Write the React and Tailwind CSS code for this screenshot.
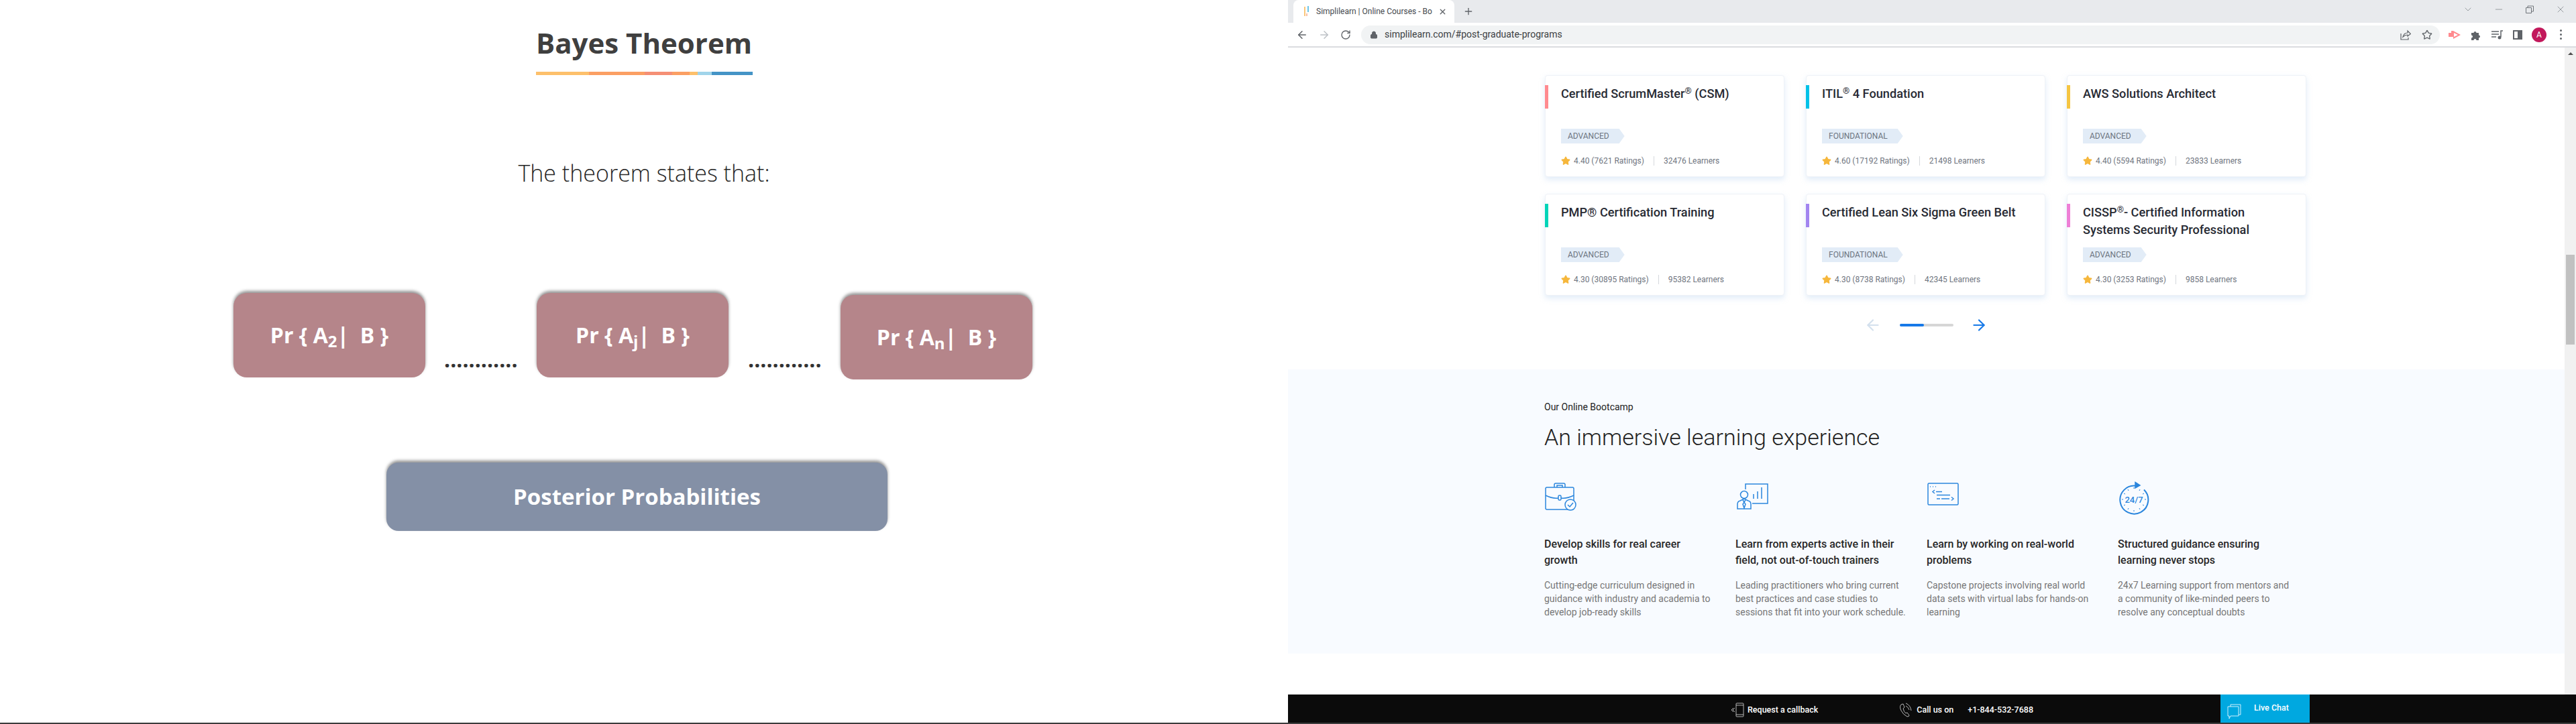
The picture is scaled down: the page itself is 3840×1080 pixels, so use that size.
import { ArrowLeft, ArrowRight, RotateCw, Lock, Star, X, Plus, Minus, ChevronDown } from "lucide-react";

const courses = [
  { title: <>Certified ScrumMaster<sup className="text-[13px] font-normal">®</sup> (CSM)</>, bar: "bg-[#ff8a8f]", level: "ADVANCED", rating: "4.40 (7621 Ratings)", learners: "32476 Learners" },
  { title: <>ITIL<sup className="text-[13px] font-normal">®</sup> 4 Foundation</>, bar: "bg-[#00c2e8]", level: "FOUNDATIONAL", rating: "4.60 (17192 Ratings)", learners: "21498 Learners" },
  { title: "AWS Solutions Architect", bar: "bg-[#f5c542]", level: "ADVANCED", rating: "4.40 (5594 Ratings)", learners: "23833 Learners" },
  { title: "PMP® Certification Training", bar: "bg-[#00d4b8]", level: "ADVANCED", rating: "4.30 (30895 Ratings)", learners: "95382 Learners" },
  { title: "Certified Lean Six Sigma Green Belt", bar: "bg-[#a285f0]", level: "FOUNDATIONAL", rating: "4.30 (8738 Ratings)", learners: "42345 Learners" },
  { title: <>CISSP<sup className="text-[13px] font-normal">®</sup>- Certified Information Systems Security Professional</>, bar: "bg-[#ee7fd6]", level: "ADVANCED", rating: "4.30 (3253 Ratings)", learners: "9858 Learners" },
];

function Briefcase() {
  return (
    <svg width="48" height="42" viewBox="0 0 48 42" fill="none" stroke="#2b86dd" strokeWidth="1.5">
      <rect x="1" y="7" width="42" height="33" rx="2" />
      <path d="M14 7V3a2 2 0 0 1 2-2h12a2 2 0 0 1 2 2v4M18 7V4h8v3" />
      <path d="M1 19q10 5 19 4M24 23q9 1 19-4" />
      <rect x="20" y="19" width="4" height="7" rx="1.5" />
      <circle cx="38" cy="33" r="8" fill="#f8fbff" />
      <path d="M34 33l3 3 5-6" />
    </svg>
  );
}

function Presenter() {
  return (
    <svg width="48" height="42" viewBox="0 0 48 42" fill="none" stroke="#2b86dd" strokeWidth="1.5">
      <path d="M14 10V2h33v29H24" />
      <path d="M26 24v-7M32 24V13M38 24V7" />
      <circle cx="12" cy="18" r="5.5" />
      <path d="M2 39v-7q0-4 4-5l6-3 6 3q4 1 4 5v7zM10 26l2 3 2-3M12 29l-2 3 2 6 2-6z" />
    </svg>
  );
}

function CodeWindow() {
  return (
    <svg width="48" height="35" viewBox="0 0 48 35" fill="none" stroke="#2b86dd" strokeWidth="1.5">
      <rect x="1" y="1" width="45" height="32" rx="1.5" />
      <path d="M4 6h1M8 6h1M12 6h1" />
      <path d="M11 11l-3 2.500 3 2.500M13 13.500h9M14 18.500h20M14 24h5M21 24h12M36 21.500l3 2.500-3 2.500" />
    </svg>
  );
}

function Clock() {
  return (
    <svg width="48" height="50" viewBox="0 0 48 50" fill="none" stroke="#2b86dd" strokeWidth="1.5" className="-translate-y-[2px]">
      <path d="M38 12.500A21 21 0 1 1 26 6.700" strokeWidth="2" />
      <path d="M25 1.500l7 4.500-7 4z" fill="#2b86dd" />
      <path d="M23 9v2M32 12l-1 2M38 18l-2 1M41 27h-2M38 36l-2-1M32 42l-1-2M23 45v-2M14 42l1-2M8 36l2-1M5 27h2M8 18l2 1M14 12l1 2" strokeWidth="1" />
      <text x="23" y="32" textAnchor="middle" fontSize="13" fontFamily="Roboto, sans-serif" fontWeight="500" fill="#2b86dd" stroke="none">24/7</text>
    </svg>
  );
}

const features = [
  { icon: <Briefcase />, title: "Develop skills for real career growth", text: "Cutting-edge curriculum designed in guidance with industry and academia to develop job-ready skills" },
  { icon: <Presenter />, title: "Learn from experts active in their field, not out-of-touch trainers", text: "Leading practitioners who bring current best practices and case studies to sessions that fit into your work schedule." },
  { icon: <CodeWindow />, title: "Learn by working on real-world problems", text: "Capstone projects involving real world data sets with virtual labs for hands-on learning" },
  { icon: <Clock />, title: "Structured guidance ensuring learning never stops", text: "24x7 Learning support from mentors and a community of like-minded peers to resolve any conceptual doubts" },
];

function PrBox({ sub, className = "" }) {
  return (
    <div className={`w-[286px] h-[126px] shrink-0 rounded-[20px] bg-[#b5858a] shadow-[0_-3px_4px_rgba(60,60,60,0.55)] flex items-center justify-center text-white text-[32px] font-bold whitespace-pre ${className}`}>
      <span>Pr {"{"} A<sub className="text-[24px] font-bold">{sub}</sub>|  B {"}"}</span>
    </div>
  );
}

function Dots() {
  return <div className="w-[110px] shrink-0 mb-[12px] text-[32px] font-bold leading-[30px] text-[#333] whitespace-nowrap">............</div>;
}

function CourseCard({ course }) {
  return (
    <div className="h-[152px] rounded-[4px] border border-[#eef2f7] bg-white shadow-[0_4px_8px_rgba(170,200,235,0.35)] flex">
      <div className={`w-[5px] h-[35px] mt-[14px] -ml-px shrink-0 ${course.bar}`} />
      <div className="pl-[19px] pr-3 pt-[14px] flex flex-col">
        <div className="w-[300px] h-[52px] text-[18.2px] leading-[26px] font-medium text-[#272a33]">{course.title}</div>
        <div className="mt-[13px] self-start h-[22px] pl-[10px] pr-[23px] flex items-center bg-[#e2ecf7] text-[12px] text-[#6c7480] [clip-path:polygon(0_0,calc(100%-8px)_0,100%_50%,calc(100%-8px)_100%,0_100%)]">
          {course.level}
        </div>
        <div className="mt-[19px] h-[14px] flex items-center text-[12px] text-[#6f7580]">
          <Star size={14} fill="#f6b73c" stroke="#f6b73c" className="mr-[5px]" />
          <span>{course.rating}</span>
          <span className="mx-[14px] h-[14px] w-px bg-[#d5d8dc]" />
          <span>{course.learners}</span>
        </div>
      </div>
    </div>
  );
}

function BrowserBar() {
  return (
    <>
      <div className="h-[34px] bg-[#e8eaed] flex items-end text-[#5f6368]">
        <div className="ml-2 w-[240px] h-[34px] rounded-t-lg bg-white flex items-center pl-[16px] pr-[11px]">
          <svg width="8" height="18" viewBox="0 0 8 18" className="shrink-0">
            <path d="M1 2v14" stroke="#f9b34d" strokeWidth="1.5" />
            <path d="M6 1v9" stroke="#39b0e0" strokeWidth="1.5" />
            <path d="M4 12v4" stroke="#f08050" strokeWidth="1" />
          </svg>
          <span className="ml-[10px] flex-1 overflow-hidden whitespace-nowrap text-[12px] text-[#45494e]">Simplilearn | Online Courses - Bo</span>
          <X size={13} strokeWidth={2.5} className="ml-2" />
        </div>
        <Plus size={16} className="ml-[13px] mb-[9px]" />
        <div className="flex-1" />
        <div className="flex items-center h-[28px] self-start gap-[30px] pr-[15px] text-[#70757a]">
          <ChevronDown size={16} strokeWidth={1} />
          <Minus size={16} strokeWidth={1} />
          <svg width="16" height="16" viewBox="0 0 16 16" fill="none" stroke="currentColor"><path d="M2.500 5.500h8v8h-8zM5 5.500V3h8.500v8H10.500" /></svg>
          <X size={16} strokeWidth={1} />
        </div>
      </div>
      <div className="h-[37px] bg-white border-b-2 border-[#dadce0] flex items-center text-[#5f6368]">
        <ArrowLeft size={18} className="ml-[12px]" />
        <ArrowRight size={18} className="ml-[15px] text-[#bdc1c6]" />
        <RotateCw size={16} className="ml-[15px]" />
        <div className="ml-[15px] w-[1608px] h-[28px] rounded-full bg-[#f1f3f4] flex items-center pl-[13px] pr-[11px]">
          <Lock size={12} fill="#5f6368" />
          <span className="ml-[10px] flex-1 text-[14px] text-[#3c4043]">simplilearn.com/#post-graduate-programs</span>
          <svg width="16" height="16" viewBox="0 0 16 16" fill="none" stroke="currentColor" strokeWidth="1.2">
            <path d="M1 6v9h11v-3" />
            <path d="M4 11c1-4 4-6 7-6V2l4.500 4.500L11 10V8c-3 0-5 1-7 3z" />
          </svg>
          <Star size={16} strokeWidth={2} className="ml-4" />
        </div>
        <svg width="18" height="14" viewBox="0 0 18 14" className="ml-[13px] shrink-0">
          <path d="M0 4h4V1h3l11 6-11 6v-3H0z" fill="#ff8a8f" />
          <path d="M8 4l6 3-6 3z" fill="#fff" />
        </svg>
        <svg width="16" height="16" viewBox="0 0 16 16" className="ml-[15px] shrink-0" fill="#5f6368">
          <path d="M1 5h3.500a2 2 0 1 1 4 0H12v3.500a2 2 0 1 1 0 4V16H8.500a2 2 0 1 0-4 0H1v-3.500a2 2 0 1 0 0-4z" />
        </svg>
        <svg width="17" height="14" viewBox="0 0 17 14" className="ml-[15px] shrink-0" fill="none" stroke="#5f6368" strokeWidth="1.500">
          <path d="M0 2h11M0 6h11M0 10h7M14 10V1h3" />
          <circle cx="12" cy="11" r="2.500" fill="#5f6368" stroke="none" />
        </svg>
        <div className="ml-[15px] w-[14px] h-[14px] shrink-0 border-2 border-[#5f6368] border-r-[7px]" />
        <div className="ml-[14px] w-[22px] h-[22px] shrink-0 rounded-full bg-[#c2185b] flex items-center justify-center text-white text-[12px]">A</div>
        <div className="ml-[20px] flex flex-col gap-[3px]">
          <span className="w-[3px] h-[3px] rounded-full bg-[#5f6368]" />
          <span className="w-[3px] h-[3px] rounded-full bg-[#5f6368]" />
          <span className="w-[3px] h-[3px] rounded-full bg-[#5f6368]" />
        </div>
      </div>
    </>
  );
}

function Footer() {
  return (
    <div className="h-[42px] bg-[#0b0b0b] flex items-start text-white text-[12.5px] font-medium font-['Roboto',sans-serif]">
      <div className="ml-[660px] h-full pt-[4px] flex items-center">
        <svg width="20" height="22" viewBox="0 0 20 22" fill="none" stroke="#ddd" strokeWidth="0.8">
          <path d="M4 8l-3 3 3 3M6 8l-3 3 3 3" />
          <rect x="8" y="1" width="11" height="20" rx="1" />
          <path d="M8 4h11M8 18h11" />
        </svg>
        <span className="ml-[5px]">Request a callback</span>
      </div>
      <div className="ml-[121px] h-full pt-[4px] flex items-center">
        <svg width="20" height="22" viewBox="0 0 20 22" fill="none" stroke="#ddd" strokeWidth="0.8">
          <path d="M3 3q-3 3 0 9t9 9q3 0 3-2l-3-4-2 1q-3-2-4-7l2-2-2-5z" />
          <path d="M10 1q7 3 8 11M10 5q4 2 5 6" />
        </svg>
        <span className="ml-[6px]">Call us on</span>
        <span className="ml-[21px]">+1-844-532-7688</span>
      </div>
      <div className="ml-[279px] w-[133px] h-full bg-[#00a8e0] flex items-start pt-[12px] pl-[10px]">
        <svg width="22" height="24" viewBox="0 0 22 24" fill="none" stroke="#e6f7ff" strokeWidth="0.9" className="mt-[2px]">
          <path d="M5 4V1h15v15h-3" />
          <path d="M1 4h16v14H5l-2 4v-4H1z" />
        </svg>
        <span className="ml-[18px] mt-[-1px]">Live Chat</span>
      </div>
    </div>
  );
}

export default function App() {
  return (
    <div className="w-[3840px] h-[1080px] flex flex-col overflow-hidden bg-white">
      <div className="flex-1 flex min-h-0">
        {/* slide */}
        <div className="w-[1920px] shrink-0 bg-white font-['Open_Sans',sans-serif]">
          <div className="pt-[34px] flex flex-col items-center w-[1920px]">
            <h1 className="text-[42px] leading-[60px] font-bold text-[#3f3f3f]">Bayes Theorem</h1>
            <div className="mt-[13px] flex h-[5px] w-[323px]">
              <span className="w-[79px] bg-[#fdc06b]" />
              <span className="w-[83px] bg-[#fb9f63]" />
              <span className="w-[41px] bg-[#f58f75]" />
              <span className="w-[26px] bg-[#fb9f63]" />
              <span className="w-[12px] bg-[#fdc06b]" />
              <span className="w-[21px] bg-[#a0d4ea]" />
              <span className="w-[61px] bg-[#4494c6]" />
            </div>
            <p className="mt-[122px] text-[34px] leading-[48px] font-light text-[#262626]">The theorem states that:</p>
          </div>
          <div className="mt-[155px] pl-[348px] flex items-end">
            <PrBox sub="2" />
            <div className="ml-[28px]"><Dots /></div>
            <PrBox sub="j" className="ml-[28px]" />
            <div className="ml-[29px]"><Dots /></div>
            <PrBox sub="n" className="ml-[28px] translate-y-[3px]" />
          </div>
          <div className="mt-[127px] ml-[576px] w-[747px] h-[102px] rounded-[18px] bg-[#8490a6] shadow-[0_-3px_4px_rgba(60,60,60,0.55)] flex items-center justify-center text-white text-[33px] font-bold">
            Posterior Probabilities
          </div>
        </div>

        {/* browser */}
        <div className="w-[1920px] shrink-0 flex flex-col font-['Roboto',sans-serif]">
          <BrowserBar />
          <div className="flex-1 min-h-0 flex">
            <div className="w-[1903px] shrink-0 overflow-hidden bg-white">
              <div className="ml-[383px] mt-[41px] w-[1135px] grid grid-cols-3 gap-x-[32px] gap-y-[25px]">
                {courses.map((course, i) => (
                  <CourseCard key={i} course={course} />
                ))}
              </div>
              <div className="ml-[859px] mt-[33px] h-[22px] flex items-center">
                <ArrowLeft size={26} strokeWidth={2} className="text-[#d3e0ed]" />
                <div className="ml-[27px] w-[80px] h-[4px] rounded-full bg-[#d6d6d6]">
                  <div className="w-[36px] h-[4px] rounded-full bg-[#1679e8]" />
                </div>
                <ArrowRight size={26} strokeWidth={2} className="ml-[25px] text-[#1679e8]" />
              </div>
              <div className="mt-[55px] h-[424px] bg-[#f8fbff] pl-[382px] pt-[47px]">
                <div className="text-[14px] leading-[18px] text-[#222]">Our Online Bootcamp</div>
                <h2 className="mt-[16px] text-[34px] leading-[40px] font-light text-[#222]">An immersive learning experience</h2>
                <div className="mt-[48px] grid grid-cols-[285px_285px_285px_285px]">
                  {features.map((f) => (
                    <div key={f.title} className="w-[260px]">
                      <div className="h-[40px] pl-[1px]">{f.icon}</div>
                      <h3 className="mt-[40px] w-[250px] h-[48px] text-[16px] leading-[24px] font-medium text-[#272727]">{f.title}</h3>
                      <p className="mt-[15px] text-[14px] leading-[20px] text-[#767676]">{f.text}</p>
                    </div>
                  ))}
                </div>
              </div>
            </div>
            {/* scrollbar */}
            <div className="w-[17px] shrink-0 bg-[#f1f1f1] pt-[7px] flex flex-col items-center">
              <div className="w-0 h-0 border-x-[4px] border-x-transparent border-b-[4px] border-b-[#505050]" />
              <div className="mt-[298px] w-[13px] h-[134px] bg-[#c1c1c1]" />
            </div>
          </div>
          <Footer />
        </div>
      </div>
      <div className="h-[2px] shrink-0 bg-[#3c3c3c]" />
    </div>
  );
}
